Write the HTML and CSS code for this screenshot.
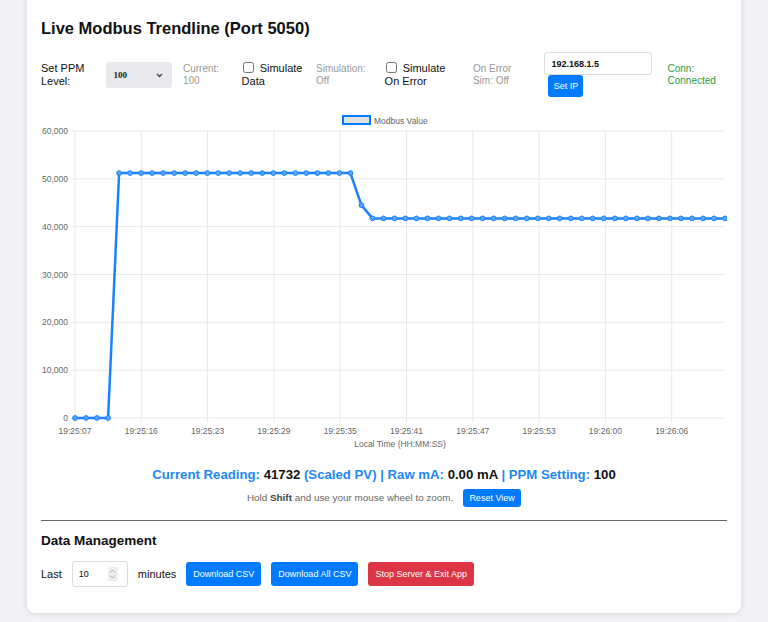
FILE: index.html
```html
<!DOCTYPE html>
<html lang="en">
<head>
  <meta charset="UTF-8" />
  <meta name="viewport" content="width=device-width, initial-scale=1.0"/>
  <title>Live Modbus Trendline</title>
  <link rel="stylesheet" href="styles.css">
</head>
<body>
  <div class="container">
    <h1>Live Modbus Trendline (Port 5050)</h1>

    <div class="controls">
      <label class="ctl-label" for="ppm">Set PPM Level:</label>
      <div class="select-wrap">
        <select id="ppm" class="ppm-select">
          <option>100</option>
          <option>200</option>
          <option>500</option>
        </select>
        <svg class="chevron" width="7" height="5" viewBox="0 0 7 5"><path d="M1 1 L3.5 3.5 L6 1" fill="none" stroke="#444" stroke-width="1.3"/></svg>
      </div>
      <span class="status status-ppm">Current: 100</span>

      <label class="check check-sim"><input type="checkbox"> Simulate Data</label>
      <span class="status status-sim">Simulation: Off</span>

      <label class="check check-err"><input type="checkbox"> Simulate On Error</label>
      <span class="status status-err">On Error Sim: Off</span>

      <div class="ip-group">
        <input type="text" class="ip-input" value="192.168.1.5">
        <button class="btn btn-ip">Set IP</button>
      </div>
      <span class="status conn">Conn: Connected</span>
    </div>

    <div class="chart-wrap">
      <svg id="trend" width="686" height="340" viewBox="41 112 686 340"></svg>
    </div>

    <p class="reading">
      Current Reading: <span class="val">41732</span> (Scaled PV) | Raw mA: <span class="val">0.00 mA</span> | PPM Setting: <span class="val">100</span>
    </p>
    <p class="hint">Hold <b>Shift</b> and use your mouse wheel to zoom. <button class="btn btn-reset">Reset View</button></p>

    <hr>

    <h2>Data Management</h2>
    <div class="data-row">
      <span>Last</span>
      <div class="num-wrap">
        <input type="text" class="minutes" value="10">
        <span class="spin">
          <svg width="7" height="12" viewBox="0 0 7 12"><path d="M1 4.5 L3.5 2 L6 4.5 M1 7.5 L3.5 10 L6 7.5" fill="none" stroke="#999" stroke-width="0.9"/></svg>
        </span>
      </div>
      <span>minutes</span>
      <button class="btn">Download CSV</button>
      <button class="btn">Download All CSV</button>
      <button class="btn btn-danger">Stop Server &amp; Exit App</button>
    </div>
  </div>

  <script>
    (function () {
      // plot area in page coordinates
      const plotLeft = 75, plotRight = 725, plotTop = 131, plotBottom = 418;
      const yMax = 60000;
      const ns = "http://www.w3.org/2000/svg";
      const svg = document.getElementById("trend");

      function el(tag, attrs, text) {
        const e = document.createElementNS(ns, tag);
        for (const k in attrs) e.setAttribute(k, attrs[k]);
        if (text) e.textContent = text;
        svg.appendChild(e);
        return e;
      }

      // samples: idle, jump to 51200, settle at 41732
      const values = [];
      for (let i = 0; i < 60; i++) {
        if (i < 4) values.push(0);
        else if (i < 26) values.push(51200);
        else if (i === 26) values.push(44500);
        else values.push(41732);
      }
      const step = (plotRight - plotLeft) / (values.length - 1);
      const yOf = v => plotBottom - (v / yMax) * (plotBottom - plotTop);

      // horizontal grid + y labels
      for (let i = 0; i <= 6; i++) {
        const y = plotTop + i * (plotBottom - plotTop) / 6;
        el("line", { x1: 71, x2: plotRight, y1: y, y2: y, class: "grid" });
        el("text", { x: 68, y: y + 3, class: "tick", "text-anchor": "end" },
          (yMax - i * 10000).toLocaleString("en-US"));
      }

      // vertical grid + time labels
      const times = ["19:25:07", "19:25:16", "19:25:23", "19:25:29", "19:25:35",
                     "19:25:41", "19:25:47", "19:25:53", "19:26:00", "19:26:06"];
      times.forEach((t, k) => {
        const x = plotLeft + k * 66.3;
        el("line", { x1: x, x2: x, y1: plotTop, y2: plotBottom + 4, class: "grid" });
        el("text", { x: x, y: plotBottom + 16, class: "tick", "text-anchor": "middle" }, t);
      });
      el("text", { x: 400, y: 447, class: "tick", "text-anchor": "middle" }, "Local Time (HH:MM:SS)");

      // legend
      el("rect", { x: 343, y: 116, width: 27, height: 8, class: "legend-box" });
      el("text", { x: 374, y: 123.5, class: "tick" }, "Modbus Value");

      // data line + points
      const pts = values.map((v, i) => (plotLeft + i * step).toFixed(1) + "," + yOf(v).toFixed(1));
      el("polyline", { points: pts.join(" "), class: "series" });
      values.forEach((v, i) => {
        el("circle", { cx: plotLeft + i * step, cy: yOf(v), r: 2.4, class: "point" });
      });
    })();
  </script>
</body>
</html>
```

FILE: styles.css
```css
body {
  margin: 0;
  font-family: "Liberation Sans", Arial, sans-serif;
  background: #f2f2f7;
  color: #111;
}

.container {
  width: 686px;
  margin: -12px auto 10px;
  padding: 31px 14px 26px;
  background: white;
  border-radius: 8px;
  box-shadow: 0 1px 6px rgba(0,0,0,0.12);
}

h1 {
  font-size: 16.5px;
  margin: 0 0 14px;
}

.controls {
  display: flex;
  align-items: center;
  gap: 11px;
  font-size: 11px;
}

.ctl-label {
  width: 54px;
  line-height: 13px;
}

.select-wrap {
  position: relative;
  width: 67px;
  height: 26px;
}

.ppm-select {
  appearance: none;
  width: 100%;
  height: 100%;
  border: none;
  border-radius: 3px;
  background: #e9e9ed;
  font: bold 9px "Liberation Serif", serif;
  color: #222;
  padding-left: 8px;
}

.chevron {
  position: absolute;
  right: 9px;
  top: 11px;
  pointer-events: none;
}

.status {
  font-size: 10px;
  line-height: 12px;
  color: #999;
}

.status-ppm { width: 48px; }
.status-sim { width: 58px; }
.status-err { width: 61px; }

.check {
  line-height: 13px;
}

.check input {
  width: 11px;
  height: 11px;
  margin: 0 3px 0 1px;
  vertical-align: -1px;
}

.check-sim { width: 64px; }
.check-err { width: 78px; }

.ip-group {
  width: 113px;
  display: flex;
  flex-direction: column;
  align-items: flex-start;
}

.ip-input {
  width: 108px;
  height: 23px;
  box-sizing: border-box;
  border: 1px solid #ddd;
  border-radius: 3px;
  padding: 0 6px;
  font: bold 9px "Liberation Sans", Arial, sans-serif;
  color: #111;
}

.conn {
  color: #1f9d3a;
  width: 60px;
}

.btn {
  background: #007bff;
  color: white;
  border: none;
  border-radius: 3px;
  font: 9px "Liberation Sans", Arial, sans-serif;
  padding: 0 7px;
  height: 24px;
  white-space: nowrap;
  cursor: pointer;
}

.btn-danger {
  background: #dc3545;
}

.btn-ip {
  margin-left: 4px;
  width: 35px;
  height: 22px;
  padding: 0;
}

.chart-wrap {
  height: 340px;
  margin-top: 15px;
}

#trend {
  display: block;
}

.grid {
  stroke: #e8e8e8;
  stroke-width: 1;
}

.tick {
  font-size: 8.5px;
  fill: #666;
  font-family: "Liberation Sans", Arial, sans-serif;
}

.legend-box {
  fill: #e2e2e2;
  stroke: #007bff;
  stroke-width: 2;
}

.series {
  fill: none;
  stroke: #1a82fb;
  stroke-width: 2.5;
  stroke-linejoin: round;
}

.point {
  fill: #5aa5fc;
  stroke: #1a82fb;
  stroke-width: 1;
}

.reading {
  text-align: center;
  font-size: 13.2px;
  font-weight: bold;
  color: #1e88f5;
  margin: 15px 0 7px;
}

.reading .val {
  color: #111;
}

.hint {
  text-align: center;
  font-size: 9.9px;
  color: #666;
  margin: 0;
}

.hint b {
  color: #444;
}

.btn-reset {
  margin-left: 7px;
  height: 18px;
  width: 58px;
  padding: 0;
}

hr {
  border: none;
  border-top: 1.5px solid #666;
  margin: 13px 0 12px;
}

h2 {
  font-size: 13.5px;
  margin: 0 0 13px;
}

.data-row {
  display: flex;
  align-items: center;
  gap: 10px;
  font-size: 11px;
}

.num-wrap {
  display: flex;
  align-items: center;
  width: 56px;
  height: 26px;
  box-sizing: border-box;
  border: 1px solid #ddd;
  border-radius: 3px;
  padding: 0 9px 0 6px;
}

.minutes {
  width: 100%;
  min-width: 0;
  border: none;
  outline: none;
  padding: 0;
  font: 9px "Liberation Sans", Arial, sans-serif;
  color: #111;
}

.spin {
  display: flex;
  align-items: center;
  justify-content: center;
  flex: none;
  width: 10px;
  height: 14px;
  background: #eee;
  border-radius: 2px;
}
```
